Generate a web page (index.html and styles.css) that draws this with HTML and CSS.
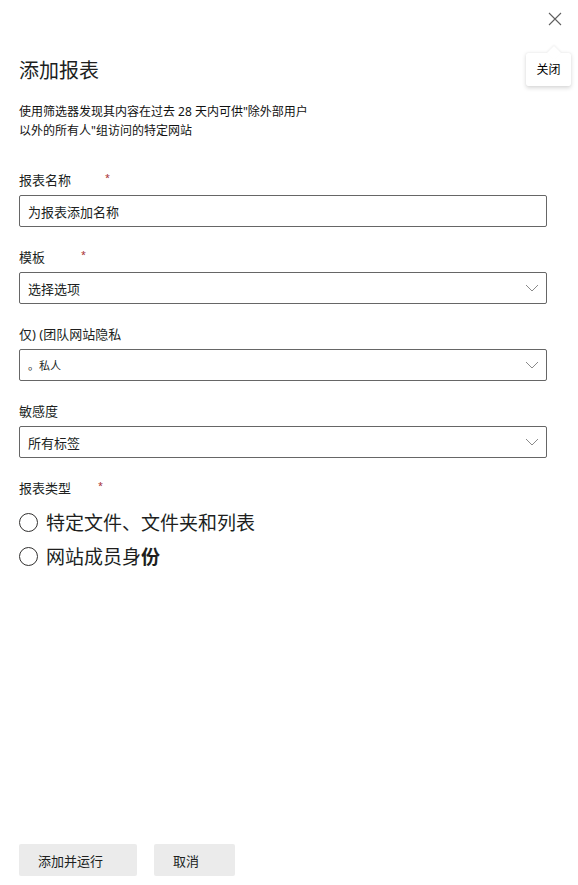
FILE: index.html
```html
<!DOCTYPE html>
<html lang="zh-CN">
<head>
<meta charset="utf-8">
<title>添加报表</title>
<link rel="stylesheet" href="styles.css">
</head>
<body>
<div class="panel">
  <div class="topbar">
    <button class="close" aria-label="关闭">
      <svg width="14" height="14" viewBox="0 0 14 14"><path d="M1 1 L13 13 M13 1 L1 13" stroke="#5f5f5f" stroke-width="1.1" fill="none"/></svg>
    </button>
    <div class="tooltip">关闭</div>
  </div>
  <h1 class="title">添加报表</h1>
  <p class="desc">使用筛选器发现其内容在过去 28 天内可供"除外部用户<br>以外的所有人"组访问的特定网站</p>

  <div class="field">
    <div class="label">报表名称<span class="req req-a">*</span></div>
    <div class="box">为报表添加名称</div>
  </div>
  <div class="field">
    <div class="label">模板<span class="req req-b">*</span></div>
    <div class="box select"><span>选择选项</span><svg class="chev" width="14" height="8" viewBox="0 0 14 8"><path d="M1 1 L7 7 L13 1" stroke="#8a8a8a" stroke-width="1" fill="none"/></svg></div>
  </div>
  <div class="field">
    <div class="label">仅) (团队网站隐私</div>
    <div class="box select"><span class="small">。私人</span><svg class="chev" width="14" height="8" viewBox="0 0 14 8"><path d="M1 1 L7 7 L13 1" stroke="#8a8a8a" stroke-width="1" fill="none"/></svg></div>
  </div>
  <div class="field">
    <div class="label">敏感度</div>
    <div class="box select"><span>所有标签</span><svg class="chev" width="14" height="8" viewBox="0 0 14 8"><path d="M1 1 L7 7 L13 1" stroke="#8a8a8a" stroke-width="1" fill="none"/></svg></div>
  </div>
  <div class="field type">
    <div class="label">报表类型<span class="req req-c">*</span></div>
    <div class="radios">
      <div class="radio"><span class="circle"></span><span>特定文件、文件夹和列表</span></div>
      <div class="radio"><span class="circle"></span><span>网站成员身<b>份</b></span></div>
    </div>
  </div>

  <div class="footer">
    <button class="btn btn-run">添加并运行</button>
    <button class="btn btn-cancel">取消</button>
  </div>
</div>
</body>
</html>
```
FILE: styles.css
```css
* { box-sizing: border-box; }
html, body { margin: 0; padding: 0; background: #fff; }
body {
  font-family: "Noto Sans", "Noto Sans CJK SC", sans-serif;
  color: #201f1e;
}
.panel {
  height: 885px;
  display: flex;
  flex-direction: column;
  padding: 0 31px 9px 19px;
}
.topbar {
  position: relative;
  height: 57px;
  display: flex;
  justify-content: flex-end;
  align-items: flex-start;
  margin-right: -31px;
}
.close {
  margin: 12px 16px 0 0;
  width: 14px;
  height: 14px;
  padding: 0;
  border: 0;
  background: transparent;
  display: flex;
}
.tooltip {
  position: absolute;
  top: 53px;
  right: 7px;
  width: 45px;
  height: 33px;
  background: #fff;
  border-radius: 2px;
  box-shadow: 0 1.6px 4px rgba(0,0,0,0.16), 0 0 1px rgba(0,0,0,0.10);
  font-size: 12px;
  line-height: 33px;
  text-align: center;
  color: #000;
  z-index: 2;
}
.tooltip::before {
  content: "";
  position: absolute;
  top: -5px;
  left: 23px;
  width: 10px;
  height: 10px;
  background: #fff;
  transform: rotate(45deg);
  box-shadow: -1px -1px 2px rgba(0,0,0,0.06);
}
.title {
  margin: 0;
  font-size: 20px;
  line-height: 28px;
  font-weight: 400;
  color: #201f1e;
}
.desc {
  margin: 17px 0 0;
  font-size: 12px;
  line-height: 19px;
  color: #111;
}
.field {
  margin-top: 21px;
  display: flex;
  flex-direction: column;
  gap: 5px;
}
.desc + .field { margin-top: 31px; }
.label {
  font-size: 13px;
  line-height: 19px;
  height: 19px;
  color: #201f1e;
}
.req {
  color: #a4262c;
  font-size: 9px;
  line-height: 0;
  position: relative;
  top: -4px;
}
.req-a { margin-left: 34px; }
.req-b { margin-left: 36px; }
.req-c { margin-left: 27px; }
.box {
  height: 32px;
  flex: none;
  border: 1px solid #666;
  border-radius: 2px;
  padding: 0 8px;
  font-size: 13px;
  display: flex;
  align-items: center;
  color: #201f1e;
}
.select { justify-content: space-between; padding-right: 7px; }
.small { font-size: 11px; }
.type { gap: 7px; }
.radios { display: flex; flex-direction: column; }
.radio {
  height: 34px;
  display: flex;
  align-items: center;
  gap: 8px;
  font-size: 19px;
  color: #201f1e;
}
.radio b { font-weight: 700; }
.circle {
  width: 19px;
  height: 19px;
  border: 1.3px solid #323130;
  border-radius: 50%;
  flex: none;
}
.footer {
  margin-top: auto;
  display: flex;
  gap: 17px;
}
.btn {
  height: 32px;
  border: 0;
  border-radius: 2px;
  background: #ebebeb;
  font-family: inherit;
  font-size: 13px;
  color: #201f1e;
  padding: 0 0 0 19px;
  text-align: left;
}
.btn-run { width: 118px; }
.btn-cancel { width: 81px; }
```
